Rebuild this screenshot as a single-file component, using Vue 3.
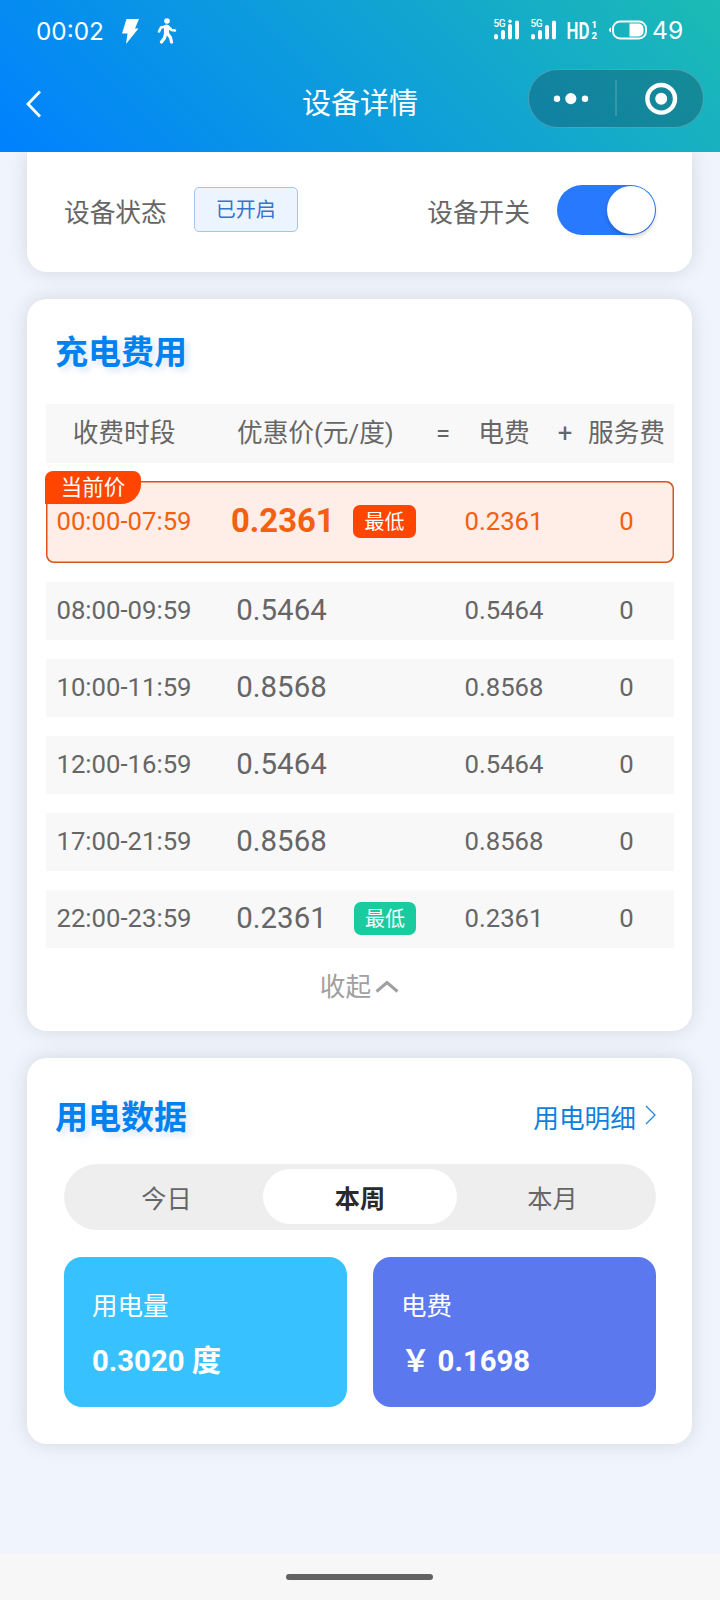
<script setup>
const rows = [
  { time: '00:00-07:59', price: '0.2361', fee: '0.2361', service: '0', lowest: true, current: true },
  { time: '08:00-09:59', price: '0.5464', fee: '0.5464', service: '0' },
  { time: '10:00-11:59', price: '0.8568', fee: '0.8568', service: '0' },
  { time: '12:00-16:59', price: '0.5464', fee: '0.5464', service: '0' },
  { time: '17:00-21:59', price: '0.8568', fee: '0.8568', service: '0' },
  { time: '22:00-23:59', price: '0.2361', fee: '0.2361', service: '0', lowest: true },
]
const tabs = ['今日', '本周', '本月']
const activeTab = '本周'
const stats = [
  { label: '用电量', value: '0.3020 度', tone: 'sky' },
  { label: '电费', value: '￥ 0.1698', tone: 'indigo' },
]
</script>

<template>
  <div class="page">
    <header class="header">
      <div class="status">
        <span class="clock">00:02</span>
        <svg class="bolt" width="17" height="25" viewBox="0 0 17 25"><path d="M4.500 0H17l-4 9.500h3.500L4 25l1.500-10.500H0z" fill="#fff" /></svg>
        <svg class="walker" width="20" height="26" viewBox="0 0 20 26" fill="none" stroke="#fff" stroke-linecap="round" stroke-linejoin="round">
          <circle cx="10" cy="3" r="2.800" fill="#fff" stroke="none" />
          <path d="M9.500 9V14.500" stroke-width="5.200" />
          <path d="M8.500 8.500L4 9.500L2 13.500M11 8.500L14.500 12L18 12.500" stroke-width="2.600" />
          <path d="M8.500 16L7.500 20L4.500 24M10.800 16L13.500 19.500L14.500 24" stroke-width="3.200" />
        </svg>
        <svg class="signals" width="196" height="40" viewBox="0 -8 196 40" fill="#fff">
          <g font-family="Roboto, sans-serif" font-size="10" font-weight="500">
            <text x="1.500" y="7.800" textLength="12">5G</text>
            <text x="38.500" y="7.800" textLength="12">5G</text>
          </g>
          <g stroke="#fff" stroke-width="4" stroke-linecap="round">
            <path d="M4 17v1.500M11 13v5.500M18 7v11.500M25 3.500v15" />
            <path d="M41 17v1.500M48 13v5.500M55 8v10.500M62 3.500v15" />
          </g>
          <circle cx="18" cy="2.300" r="1.700" />
          <text x="74.500" y="20" font-family="Roboto, sans-serif" font-size="24" font-weight="600" textLength="23" lengthAdjust="spacingAndGlyphs">HD</text>
          <g font-family="Roboto, sans-serif" font-size="9.500" font-weight="900">
            <text x="99.500" y="8.500">1</text>
            <text x="99.500" y="20">2</text>
          </g>
          <rect x="121" y="2.500" width="33" height="17" rx="7" fill="none" stroke="#fff" stroke-width="1.800" />
          <path d="M137.500 4.500h9a5 5 0 0 1 5 5v3a5 5 0 0 1-5 5h-9z" />
          <path d="M119 8.500v5l-2-1.500v-2z" />
        </svg>
        <span class="battery">49</span>
      </div>
      <div class="nav">
        <svg class="back" width="18" height="28" viewBox="0 0 18 28" fill="none" stroke="#fff" stroke-width="2.800"><path d="M17 1.500L5 14L17 26.500" /></svg>
        <h1>设备详情</h1>
        <div class="capsule">
          <svg width="176" height="59" viewBox="0 0 176 59" fill="#fff">
            <circle cx="29" cy="29.800" r="3.200" /><circle cx="42.800" cy="29.600" r="5.600" /><circle cx="57" cy="29.800" r="3.200" />
            <path d="M87.500 11v36h1V11z" opacity=".3" />
            <circle cx="133.200" cy="29.800" r="13.800" fill="none" stroke="#fff" stroke-width="4.400" />
            <circle cx="133.200" cy="29.800" r="6" />
          </svg>
        </div>
      </div>
    </header>

    <main class="content">
      <section class="card device">
        <span class="label">设备状态</span>
        <span class="state">已开启</span>
        <span class="label push">设备开关</span>
        <span class="switch"><i></i></span>
      </section>

      <section class="card pricing">
        <h2>充电费用</h2>
        <div class="row head">
          <span>收费时段</span>
          <span class="price-title">优惠价(元/度)</span>
          <span>=</span>
          <span>电费</span>
          <span>+</span>
          <span>服务费</span>
        </div>
        <div v-for="r in rows" :key="r.time" class="row" :class="{ current: r.current }">
          <span v-if="r.current" class="badge">当前价</span>
          <span>{{ r.time }}</span>
          <span class="price-cell">
            <b class="price">{{ r.price }}</b>
            <em v-if="r.lowest" class="low">最低</em>
          </span>
          <span></span>
          <span>{{ r.fee }}</span>
          <span></span>
          <span>{{ r.service }}</span>
        </div>
        <div class="fold">
          <span>收起</span>
          <svg width="24" height="14" viewBox="0 0 24 14" fill="none" stroke="#a0a0a0" stroke-width="3"><path d="M1.500 11.500L12 2.500L22.500 11.500" /></svg>
        </div>
      </section>

      <section class="card usage">
        <div class="usage-head">
          <h2>用电数据</h2>
          <a class="detail"><span>用电明细</span>
            <svg width="12" height="20" viewBox="0 0 12 20" fill="none" stroke="#2484d8" stroke-width="1.300"><path d="M1 1L10 10L1 19" /></svg>
          </a>
        </div>
        <div class="tabs">
          <span v-for="t in tabs" :key="t" :class="{ active: t === activeTab }">{{ t }}</span>
        </div>
        <div class="stats">
          <div v-for="s in stats" :key="s.label" class="stat" :class="s.tone">
            <span>{{ s.label }}</span>
            <strong>{{ s.value }}</strong>
          </div>
        </div>
      </section>
    </main>

    <footer class="footer"><i></i></footer>
  </div>
</template>

<style>
body { margin: 0; }
</style>

<style scoped>
* { box-sizing: border-box; }
.page {
  width: 720px; height: 1600px; display: flex; flex-direction: column; overflow: hidden;
  background: #f0f4fc; color: #666;
  font-family: Roboto, "Noto Sans CJK SC", sans-serif; font-size: 25.7px; line-height: 1;
}
h1, h2 { margin: 0; }
.header {
  height: 152px; flex: none; position: relative; z-index: 1;
  background: linear-gradient(45deg, #0081ff, #1cbbb4); color: #fff;
}
.status { height: 62px; display: flex; align-items: center; padding: 0 36px 0 36px; }
.clock { font: 400 24.3px/30px Inter, sans-serif; width: 86px; }
.bolt { margin-top: 1px; }
.walker { margin-left: 18px; }
.signals { margin-left: auto; }
.battery { font: 400 24.6px/30px Inter, sans-serif; margin: -2px 0 0 -36px; width: 32px; }
.nav { height: 90px; display: grid; grid-template-columns: 200px 1fr 200px; align-items: start; }
.back { margin: 28px 0 0 23px; }
h1 { font-size: 29px; font-weight: 400; line-height: 40px; margin-top: 22px; text-align: center; }
.capsule {
  width: 176px; height: 59px; margin: 7px 0 0 7.500px; border-radius: 30px;
  background: rgba(15, 60, 80, .34); box-shadow: inset 0 0 0 1px rgba(255, 255, 255, .25);
}
.capsule svg { display: block; }
.content { flex: 1; padding: 0 28px 0 27px; display: flex; flex-direction: column; gap: 27px; }
.card { background: #fff; border-radius: 20px; box-shadow: 0 0 20px rgba(0, 0, 0, .12); }
.device {
  height: 120px; border-radius: 0 0 20px 20px; display: flex; align-items: center;
  padding: 0 36px 4px 37px;
}
.label { padding-top: 7px; }
.push { margin-left: auto; }
.state {
  width: 104px; height: 45px; margin: -1px 0 0 27px; border: 1.5px solid #a3c6ea; border-radius: 5px;
  background: #ecf5ff; color: #3a72c8; font-size: 20px; line-height: 44px; text-align: center;
}
.switch {
  width: 99px; height: 50px; margin-left: 27px; border-radius: 25px; background: #2979ff;
  display: flex; justify-content: flex-end; padding: 1px;
}
.switch i { width: 48px; height: 48px; border-radius: 50%; background: #fff; box-shadow: 0 3px 4px rgba(0, 0, 0, .2); }
h2 {
  font-size: 33px; line-height: 40px; font-weight: 700; color: #0081f0;
  text-shadow: 4px 4px 6px rgba(0, 100, 200, .16);
}
.pricing { height: 732px; padding: 34px 18px 0 19px; }
.pricing h2 { margin-left: 9px; }
.row {
  display: grid; grid-template-columns: 156px 225px 32px 90px 32px 91px; align-items: center;
  height: 58.5px; margin-top: 18.5px; background: #f8f8f8; text-align: center; position: relative;
}
.row.head { margin-top: 31px; padding-top: 2px; }
.price-title { text-align: left; padding-left: 35px; }
.price-cell { display: flex; align-items: center; }
.price { width: 101px; margin-left: 29px; font-size: 29.4px; font-weight: 400; }
.low {
  width: 62px; height: 33px; margin-left: 22px; border-radius: 7px; background: #1bcba0; color: #fff;
  font-size: 20px; line-height: 34px; font-style: normal;
}
.current {
  height: 82px; margin-top: 18px; background: #ffede8; color: #f26010; border-radius: 8px;
  box-shadow: inset 0 0 0 1.5px #d9531e;
}
.current .price { font-size: 32.8px; font-weight: 700; }
.current .low { background: #ff4500; width: 63px; margin-left: 21px; }
.current + .row { margin-top: 19px; }
.badge {
  position: absolute; left: -1px; top: -10px; width: 96px; height: 33px; background: #ff4500; color: #fff;
  border-radius: 8px 8px 20px 0; font-size: 21.5px; line-height: 33px;
}
.fold { display: flex; justify-content: center; align-items: center; gap: 4px; height: 36px; margin-top: 20px; color: #a0a0a0; padding-right: 1px; }
.fold span { padding-top: 4px; }
.fold svg { margin-top: 2px; }
.usage { height: 386px; padding: 0 36px 0 37px; }
.usage-head { display: flex; justify-content: space-between; height: 106px; padding-top: 40px; }
.usage-head h2 { margin-left: -9px; }
.detail { display: flex; align-items: center; height: 40px; gap: 9px; color: #0f7fe0; }
.detail span { padding-top: 3px; }
.detail svg { margin: -6px -1px 0 0; }
.tabs { height: 66px; padding: 5px 4px 6px; border-radius: 33px; background: #eee; display: grid; grid-template-columns: 195px 194px 195px; grid-template-rows: 55px; text-align: center; line-height: 61px; font-size: 25.2px; }
.tabs span:first-child { padding-left: 2px; }
.tabs span:last-child { padding-right: 4px; }
.tabs .active { background: #fff; border-radius: 28px; font-weight: 700; color: #2a2a2a; }
.stats { display: grid; grid-template-columns: 1fr 1fr; gap: 26px; margin-top: 27px; }
.stat { height: 150px; border-radius: 18px; padding: 37px 28px 0; display: flex; flex-direction: column; gap: 26px; color: #fff; font-size: 25.5px; }
.stat strong { font-size: 29.3px; font-weight: 700; line-height: 30px; }
.sky { background: #37c2ff; }
.indigo { background: #5b78ee; }
.footer { height: 47px; flex: none; background: #f7f7f7; display: flex; justify-content: center; padding: 21px 1px 0 0; }
.footer i { width: 147px; height: 6px; border-radius: 3px; background: #626262; }
</style>
